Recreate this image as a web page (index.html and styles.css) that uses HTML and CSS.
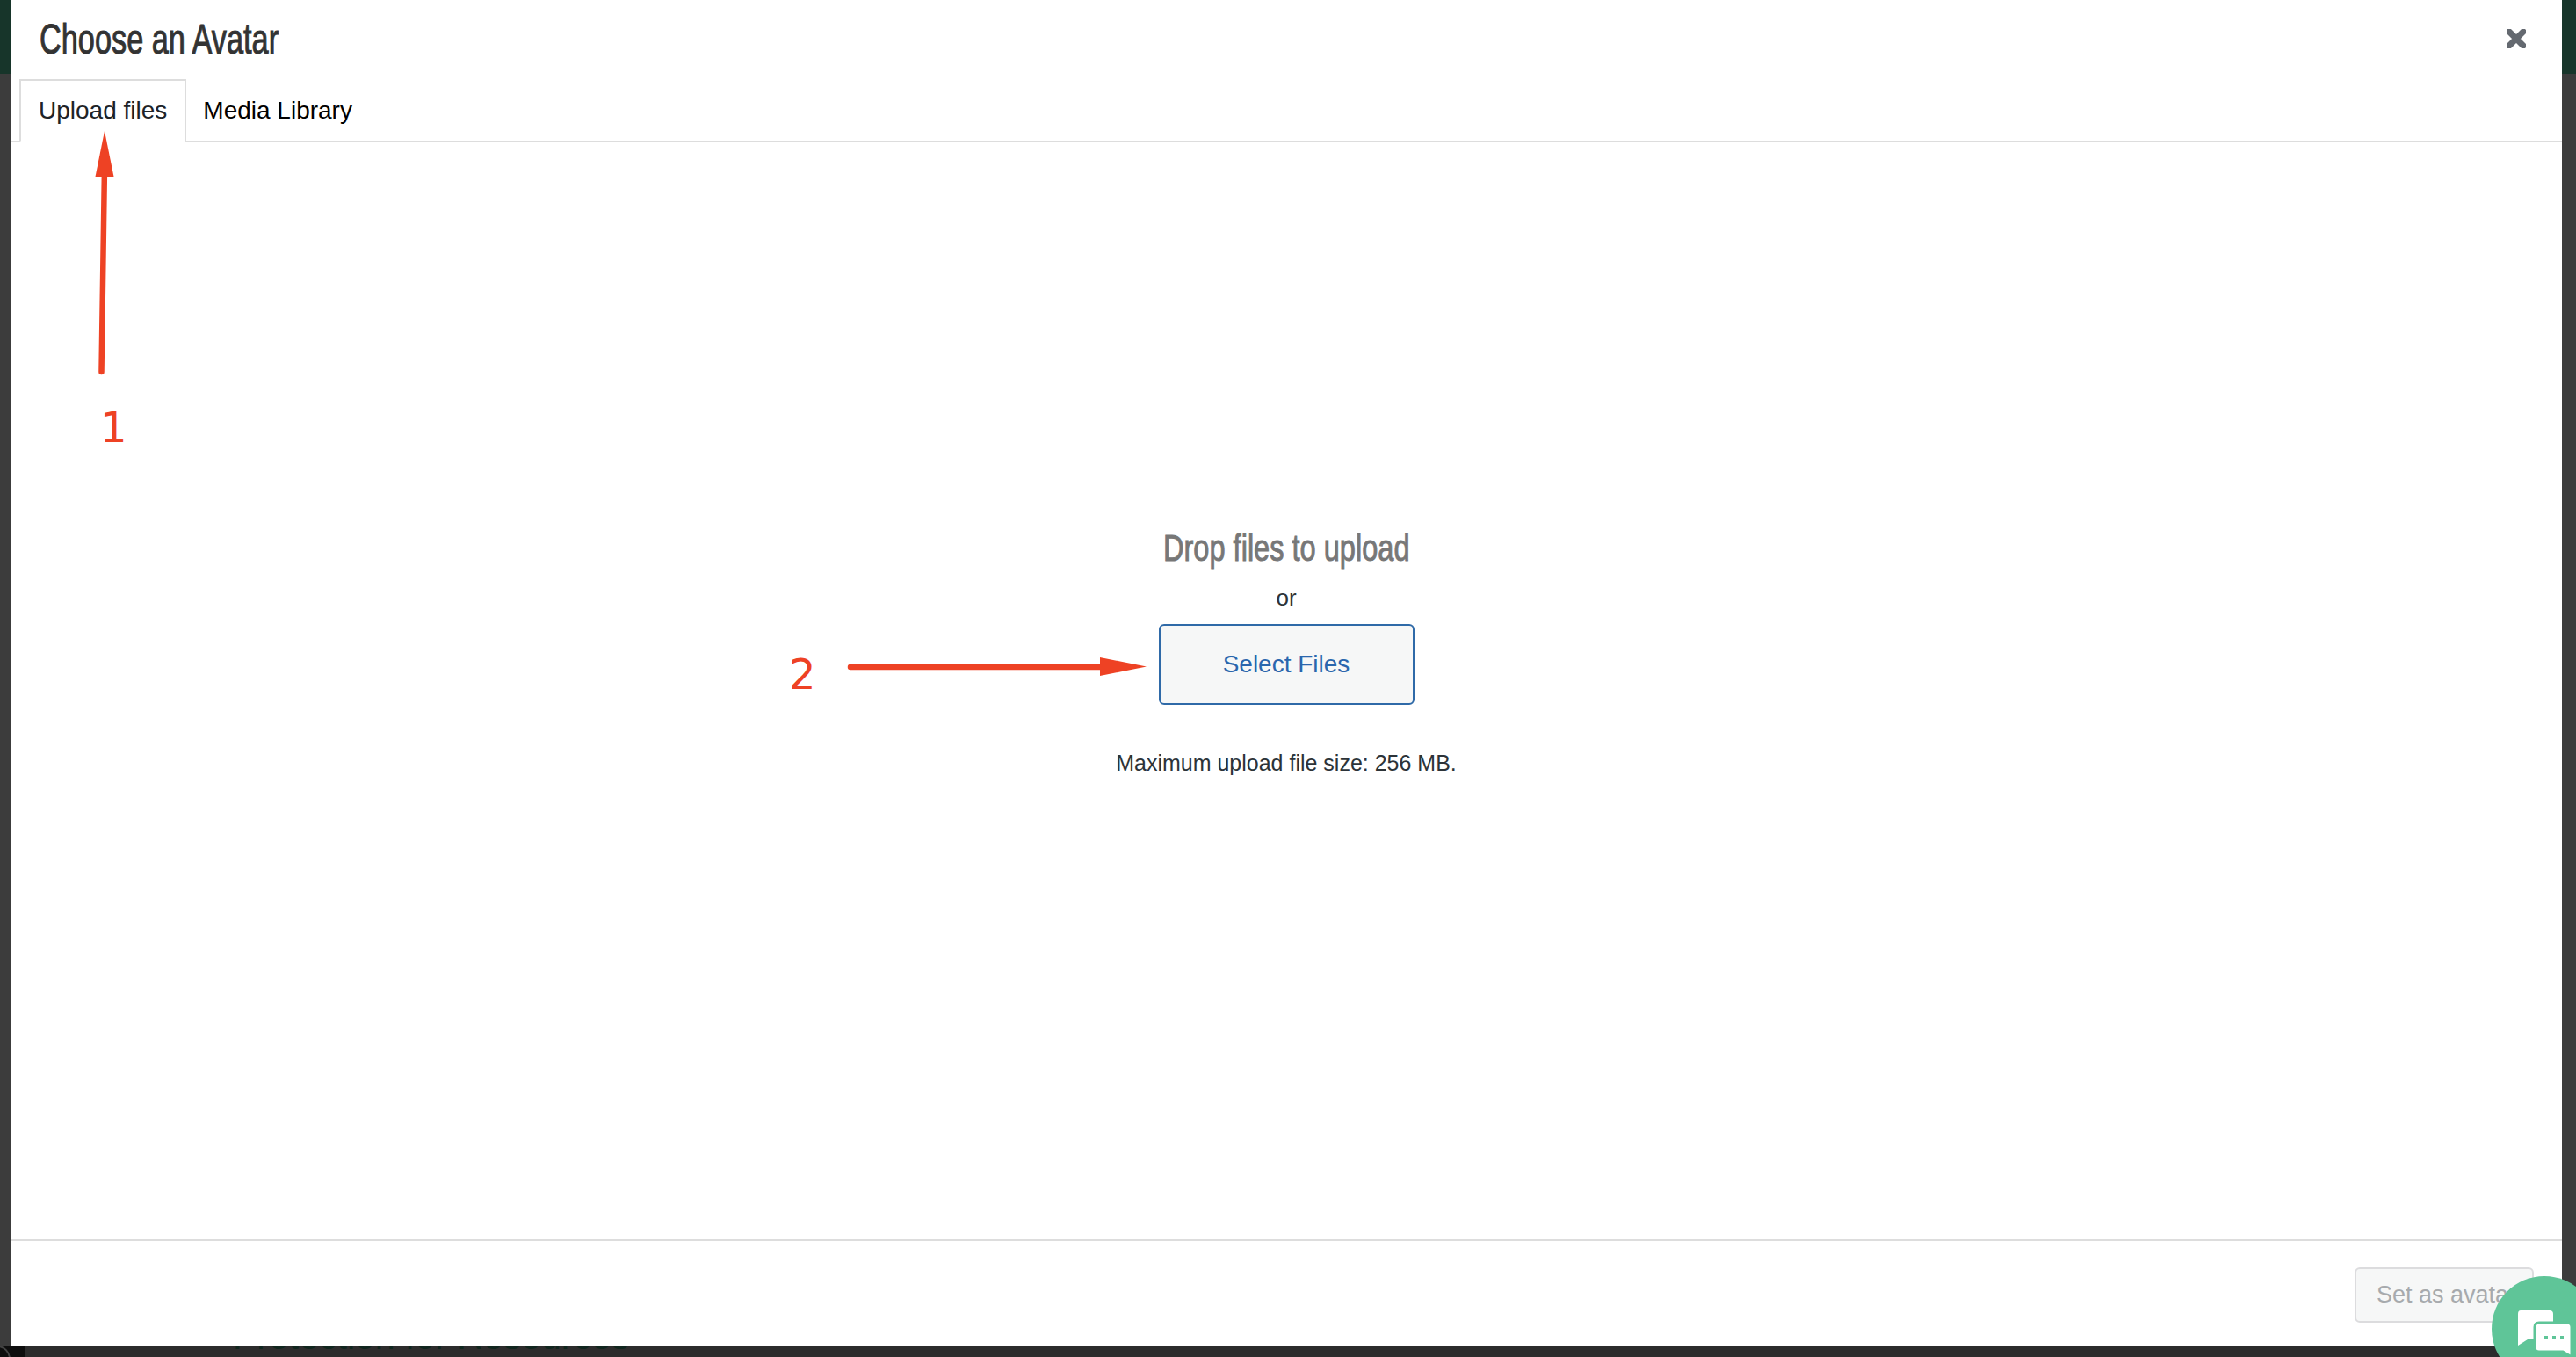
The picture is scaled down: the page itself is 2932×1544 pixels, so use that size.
FILE: index.html
```html
<!DOCTYPE html>
<html lang="en">
<head>
  <meta charset="UTF-8">
  <title>Choose an Avatar</title>
  <link rel="stylesheet" href="styles.css">
</head>
<body>
  <span class="behind-text">Protection for Resources</span>
  <span class="behind-corner"></span>
  <div class="modal">
    <header class="modal-head">
      <h1 class="modal-title">Choose an Avatar</h1>
      <button class="modal-close" aria-label="Close">
        <svg width="22" height="22" viewBox="0 0 22 22"><path d="M3 3L19 19M19 3L3 19" stroke="#646970" stroke-width="7" stroke-linecap="round"/></svg>
      </button>
    </header>
    <nav class="tabs">
      <a class="tab active">Upload files</a>
      <a class="tab">Media Library</a>
    </nav>
    <main class="uploader">
      <h2 class="drop-title">Drop files to upload</h2>
      <p class="drop-or">or</p>
      <button class="select-btn">Select Files</button>
      <p class="max-size">Maximum upload file size: 256 MB.</p>
    </main>
    <footer class="modal-foot">
      <button class="avatar-btn" disabled>Set as avatar</button>
    </footer>
  </div>

  <svg class="arrows" width="2932" height="1544" viewBox="0 0 2932 1544">
    <path d="M115.500 423L119 190" stroke="#ee4224" stroke-width="6.500" stroke-linecap="round" fill="none"/>
    <path d="M119 149L129.500 201H108.500Z" fill="#ee4224"/>
    <path d="M968 759H1256" stroke="#ee4224" stroke-width="6.500" stroke-linecap="round" fill="none"/>
    <path d="M1305 758.500L1252 748V769Z" fill="#ee4224"/>
  </svg>
  <span class="note note-one">1</span>
  <span class="note note-two">2</span>

  <div class="chat-bubble">
    <svg width="92" height="74" viewBox="0 0 92 74">
      <path d="M29 21H62Q66 21 66 25V50Q66 54 62 54H37L26 61V25Q26 21 29 21Z" fill="#fff"/>
      <path d="M50 35H82Q87 35 87 40V74L77 68H50Q45 68 45 63V40Q45 35 50 35Z" fill="#fff" stroke="#5fc598" stroke-width="3"/>
      <path d="M56 50h4v4h-4zM65 50h4v4h-4zM74 50h4v4h-4z" fill="#5fc598"/>
    </svg>
  </div>
</body>
</html>
```
FILE: styles.css
```css
html, body { margin: 0; padding: 0; height: 100%; }
body { position: relative; box-sizing: border-box; height: 1544px; overflow: hidden; padding: 0 16px 12px 12px; background: linear-gradient(#17352a 84px, #3c3c3c 84px, #3c3c3c 1532px, #2c2c2c 1532px); font-family: "Liberation Sans", Arial, sans-serif; }
.behind-text { position: absolute; left: 265px; top: 1498px; font-size: 41px; line-height: 46px; white-space: nowrap; color: #10261e; }
.behind-corner { position: absolute; left: 0; top: 1532px; width: 28px; height: 12px; overflow: hidden; background: #0e0e0e; }
.behind-corner::after { content: ""; position: absolute; left: -18px; top: -1px; width: 26px; height: 26px; border: 2px solid #444; border-radius: 50%; }
.modal { position: relative; display: flex; flex-direction: column; height: 100%; background: #fff; }
.modal-head { display: flex; align-items: center; justify-content: space-between; height: 90px; padding: 0 41px 0 33px; box-sizing: border-box; }
.modal-title { margin: 0 0 3px; font-size: 49px; font-weight: normal; color: #333; white-space: nowrap; -webkit-text-stroke: 1px #333; transform: scaleX(0.7); transform-origin: left center; }
.modal-close { display: flex; margin-bottom: 2px; padding: 0; border: none; background: none; }
.tabs { display: flex; height: 72px; padding-left: 10px; box-sizing: border-box; border-bottom: 2px solid #ddd; }
.tab { height: 72px; box-sizing: border-box; padding: 0 17px; border: 2px solid transparent; font-size: 28px; line-height: 68px; color: #000; }
.tab.active { padding: 0 20px; border-color: #ddd; border-bottom-color: #fff; color: #1d2327; }
.uploader { flex: 1; display: flex; flex-direction: column; align-items: center; padding-top: 433px; }
.drop-title { margin: 0; font-size: 43px; line-height: 56px; font-weight: normal; white-space: nowrap; color: #777; -webkit-text-stroke: 1px #777; transform: scaleX(0.757); }
.drop-or { margin: 13px 0 0; font-size: 26px; line-height: 32px; color: #2c3338; }
.select-btn { width: 291px; height: 92px; margin-top: 14px; border: 2px solid #2f6aa8; border-radius: 6px; background: #f6f7f7; font: 28px "Liberation Sans", sans-serif; color: #2a66ad; }
.max-size { margin: 50px 0 0; font-size: 25px; line-height: 32px; color: #2c3338; }
.modal-foot { display: flex; justify-content: flex-end; align-items: flex-start; height: 122px; box-sizing: border-box; padding: 30px 32px 0 0; border-top: 2px solid #ddd; }
.avatar-btn { width: 204px; height: 63px; padding: 0 0 0 23px; text-align: left; white-space: nowrap; border: 2px solid #dcdcde; border-radius: 6px; background: #f6f7f7; font: 27px "Liberation Sans", sans-serif; color: #a7aaad; }
.arrows { position: absolute; left: 0; top: 0; pointer-events: none; }
.note { position: absolute; font-family: "DejaVu Sans", sans-serif; font-size: 48px; line-height: 48px; color: #ee4224; }
.note-one { left: 114px; top: 462px; }
.note-two { left: 898px; top: 743px; }
.chat-bubble { position: absolute; left: 2836px; top: 1452px; width: 120px; height: 120px; border-radius: 50%; background: #5fc598; }
.chat-bubble svg { position: absolute; left: 4px; top: 18px; }
```
